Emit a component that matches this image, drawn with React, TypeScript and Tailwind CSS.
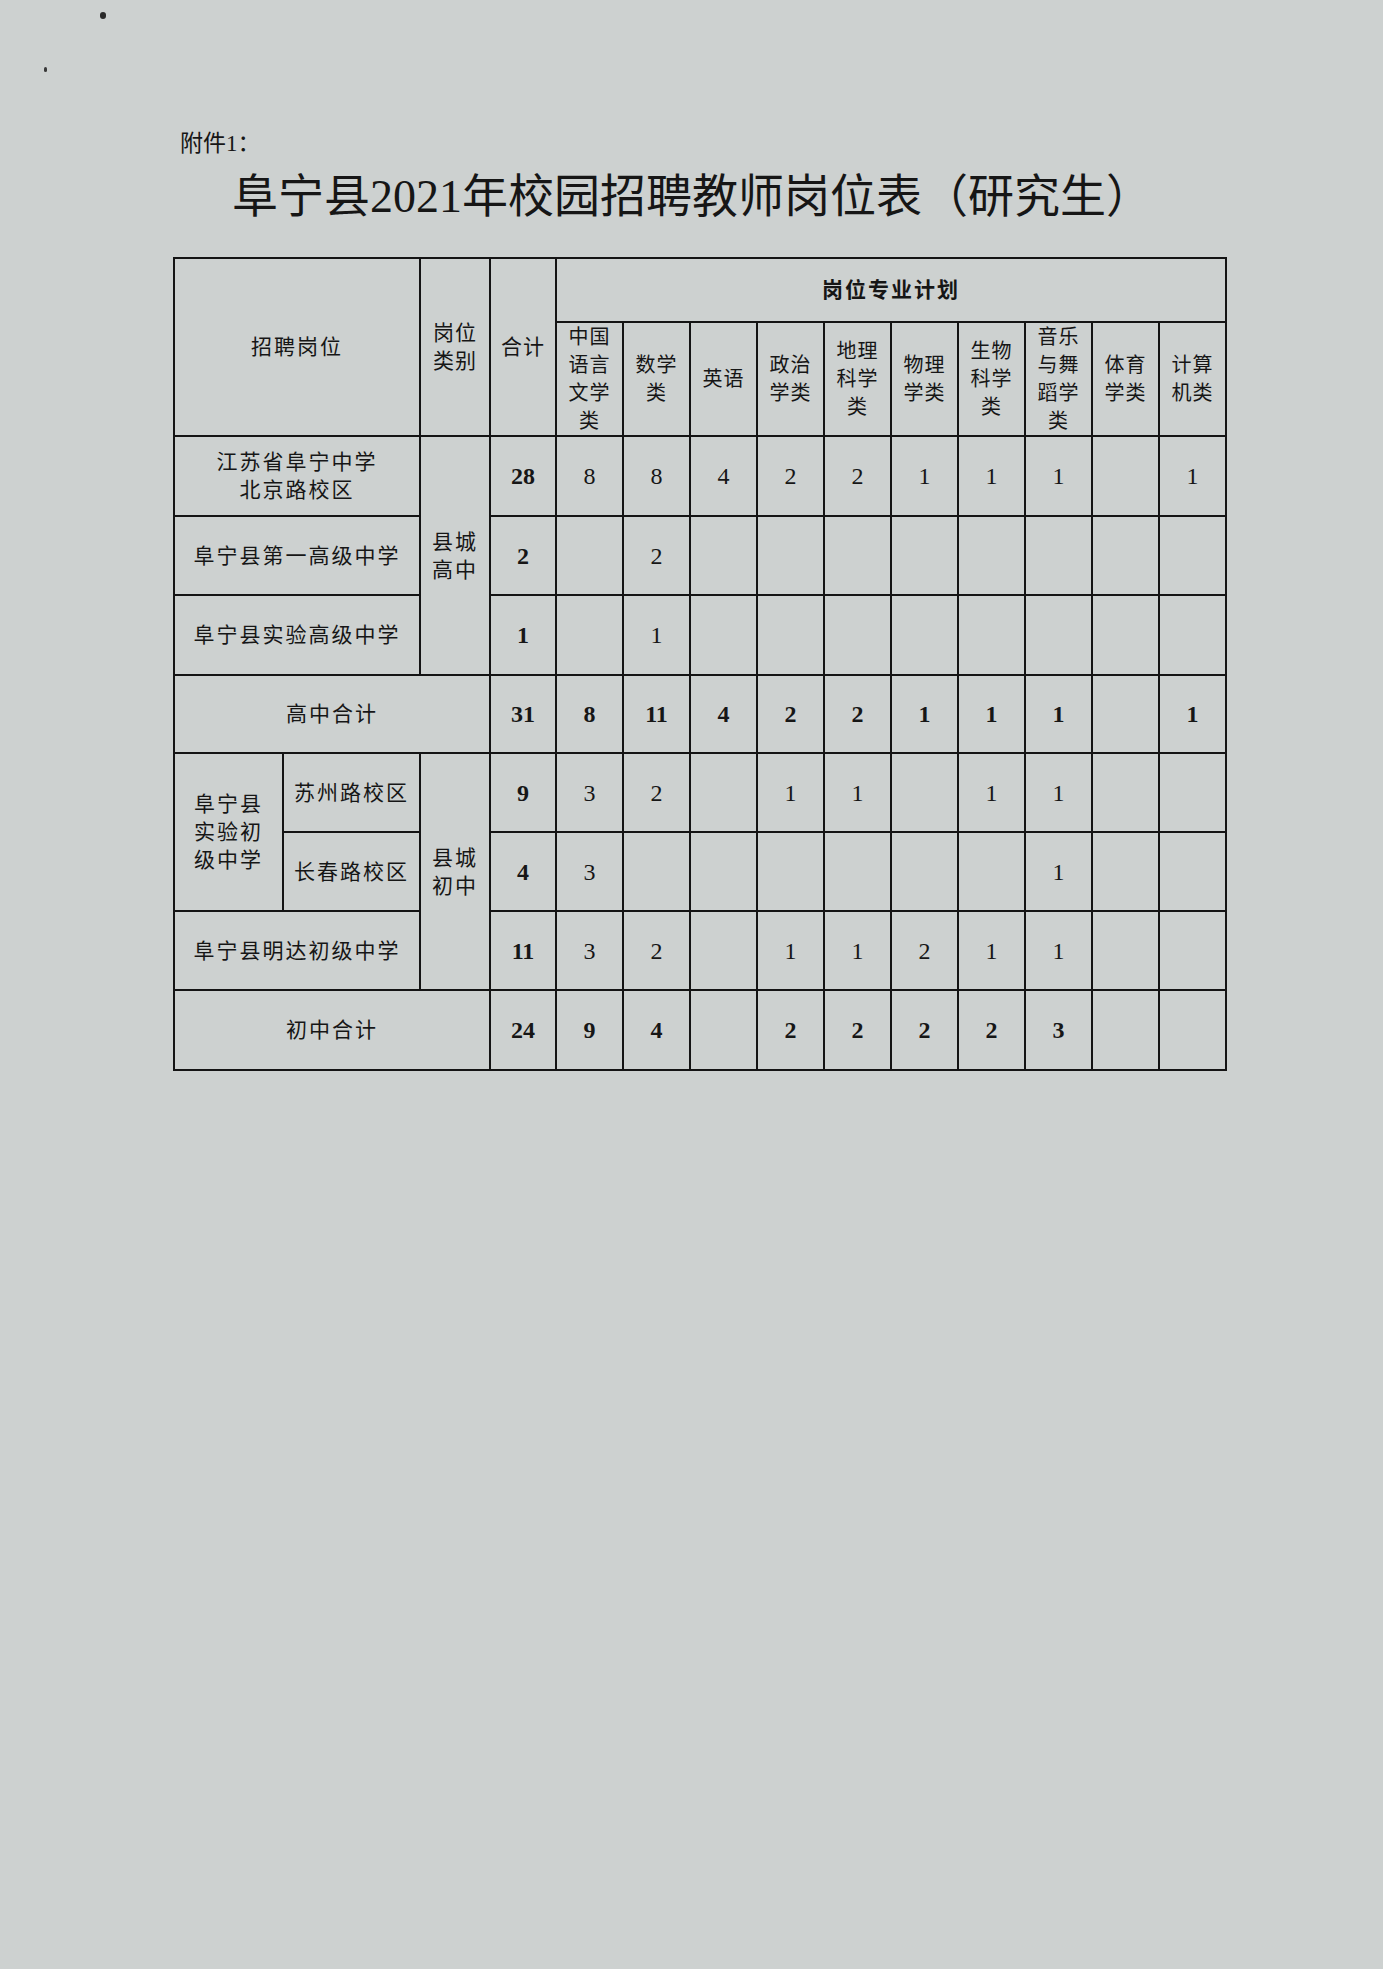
import React from "react";

type Cell = string;

const B = "border-2 border-[#141414]";
const nameCls = `${B} text-center align-middle p-0 text-[21px] leading-[28px] tracking-[2px] font-normal`;
const numCls = `${B} text-center align-middle p-0 text-[24px] leading-none font-['Liberation_Serif',serif]`;

function Lines({ lines }: { lines: string[] }) {
  return (
    <>
      {lines.map((l, i) => (
        <div key={i}>{l}</div>
      ))}
    </>
  );
}

function Nums({ total, vals, bold }: { total: string; vals: Cell[]; bold: boolean }) {
  return (
    <>
      <td className={`${numCls} font-bold`}>{total}</td>
      {vals.map((v, i) => (
        <td key={i} className={`${numCls} ${bold ? "font-bold" : "font-normal"}`}>
          {v}
        </td>
      ))}
    </>
  );
}

const subjects: string[][] = [
  ["中国", "语言", "文学", "类"],
  ["数学", "类"],
  ["英语"],
  ["政治", "学类"],
  ["地理", "科学", "类"],
  ["物理", "学类"],
  ["生物", "科学", "类"],
  ["音乐", "与舞", "蹈学", "类"],
  ["体育", "学类"],
  ["计算", "机类"],
];

export default function App() {
  return (
    <div className="relative w-[1383px] h-[1969px] overflow-hidden bg-[#cdd1d0] text-[#161616] font-['Liberation_Serif','Noto_Sans_CJK_SC',serif]">
      <div className="absolute left-[100px] top-[12px] w-[6px] h-[7px] rounded-full bg-[#2a2a2a]" />
      <div className="absolute left-[44px] top-[67px] w-[3px] h-[5px] rounded-full bg-[#3a3a3a]" />

      <div className="pl-[180px] pt-[131px] h-[157px] text-[23px] leading-[26px]">附件1：</div>
      <h1 className="mt-[17px] pl-[232px] h-[46px] text-[46px] leading-[46px] font-normal">
        阜宁县2021年校园招聘教师岗位表（研究生）
      </h1>

      <table className="mt-[37px] ml-[173px] w-[1054px] table-fixed border-collapse">
        <colgroup>
          <col className="w-[109px]" />
          <col className="w-[137px]" />
          <col className="w-[70px]" />
          <col className="w-[66px]" />
          <col />
          <col />
          <col />
          <col />
          <col />
          <col />
          <col />
          <col />
          <col />
          <col />
        </colgroup>
        <thead>
          <tr className="h-[64px]">
            <th colSpan={2} rowSpan={2} className={nameCls}>
              招聘岗位
            </th>
            <th rowSpan={2} className={`${B} text-center align-middle p-0 text-[21px] leading-[28px] tracking-[1px] font-normal`}>
              <Lines lines={["岗位", "类别"]} />
            </th>
            <th rowSpan={2} className={`${B} text-center align-middle p-0 text-[21px] leading-[28px] tracking-[1px] font-normal`}>
              合计
            </th>
            <th colSpan={10} className={`${B} text-center align-middle p-0 text-[21px] leading-[28px] tracking-[2px] font-bold`}>
              岗位专业计划
            </th>
          </tr>
          <tr className="h-[112px]">
            {subjects.map((s, i) => (
              <th
                key={i}
                className={`${B} text-center align-middle p-0 text-[20px] leading-[28px] tracking-[1px] font-normal overflow-hidden`}
              >
                <Lines lines={s} />
              </th>
            ))}
          </tr>
        </thead>
        <tbody>
          <tr className="h-[80px]">
            <td colSpan={2} className={nameCls}>
              <Lines lines={["江苏省阜宁中学", "北京路校区"]} />
            </td>
            <td rowSpan={3} className={`${nameCls} tracking-[1px]`}>
              <Lines lines={["县城", "高中"]} />
            </td>
            <Nums total="28" vals={["8", "8", "4", "2", "2", "1", "1", "1", "", "1"]} bold={false} />
          </tr>
          <tr className="h-[79px]">
            <td colSpan={2} className={nameCls}>
              阜宁县第一高级中学
            </td>
            <Nums total="2" vals={["", "2", "", "", "", "", "", "", "", ""]} bold={false} />
          </tr>
          <tr className="h-[80px]">
            <td colSpan={2} className={nameCls}>
              阜宁县实验高级中学
            </td>
            <Nums total="1" vals={["", "1", "", "", "", "", "", "", "", ""]} bold={false} />
          </tr>
          <tr className="h-[78px]">
            <td colSpan={3} className={nameCls}>
              高中合计
            </td>
            <Nums total="31" vals={["8", "11", "4", "2", "2", "1", "1", "1", "", "1"]} bold={true} />
          </tr>
          <tr className="h-[79px]">
            <td rowSpan={2} className={nameCls}>
              <Lines lines={["阜宁县", "实验初", "级中学"]} />
            </td>
            <td className={nameCls}>苏州路校区</td>
            <td rowSpan={3} className={`${nameCls} tracking-[1px]`}>
              <Lines lines={["县城", "初中"]} />
            </td>
            <Nums total="9" vals={["3", "2", "", "1", "1", "", "1", "1", "", ""]} bold={false} />
          </tr>
          <tr className="h-[79px]">
            <td className={nameCls}>长春路校区</td>
            <Nums total="4" vals={["3", "", "", "", "", "", "", "1", "", ""]} bold={false} />
          </tr>
          <tr className="h-[79px]">
            <td colSpan={2} className={nameCls}>
              阜宁县明达初级中学
            </td>
            <Nums total="11" vals={["3", "2", "", "1", "1", "2", "1", "1", "", ""]} bold={false} />
          </tr>
          <tr className="h-[80px]">
            <td colSpan={3} className={nameCls}>
              初中合计
            </td>
            <Nums total="24" vals={["9", "4", "", "2", "2", "2", "2", "3", "", ""]} bold={true} />
          </tr>
        </tbody>
      </table>
    </div>
  );
}
